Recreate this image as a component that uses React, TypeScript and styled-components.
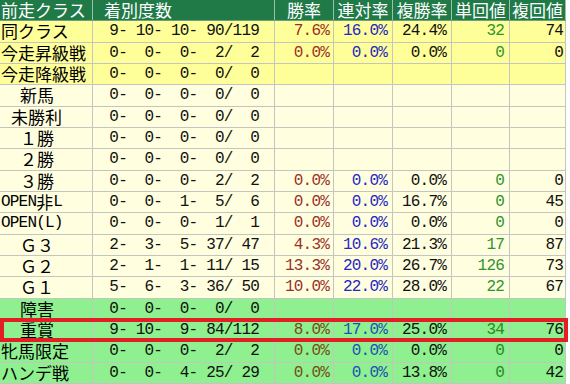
import React from "react";
import styled, { createGlobalStyle, css } from "styled-components";

const GlobalStyle = createGlobalStyle`
  html, body { margin: 0; padding: 0; background: #ffffff; }
  body { font-family: "Noto Sans CJK JP", sans-serif; }
`;

type Kind = "head" | "yellow" | "cream" | "green";

interface RowData {
  label: string;
  indent: number;
  kind: Exclude<Kind, "head">;
  rec: string;
  win?: string;
  ren?: string;
  fuku?: string;
  tan?: string;
  fk?: string;
  highlight?: boolean;
}

const EMPTY = " 0-  0-  0-  0/  0";

const rows: RowData[] = [
  { label: "同クラス", indent: 1, kind: "yellow", rec: " 9- 10- 10- 90/119", win: "7.6%", ren: "16.0%", fuku: "24.4%", tan: "32", fk: "74" },
  { label: "今走昇級戦", indent: 1, kind: "yellow", rec: " 0-  0-  0-  2/  2", win: "0.0%", ren: "0.0%", fuku: "0.0%", tan: "0", fk: "0" },
  { label: "今走降級戦", indent: 1, kind: "yellow", rec: EMPTY },
  { label: "新馬", indent: 20, kind: "cream", rec: EMPTY },
  { label: "未勝利", indent: 11, kind: "cream", rec: EMPTY },
  { label: "１勝", indent: 20, kind: "cream", rec: EMPTY },
  { label: "２勝", indent: 20, kind: "cream", rec: EMPTY },
  { label: "３勝", indent: 20, kind: "cream", rec: " 0-  0-  0-  2/  2", win: "0.0%", ren: "0.0%", fuku: "0.0%", tan: "0", fk: "0" },
  { label: "OPEN非L", indent: 1, kind: "cream", rec: " 0-  0-  1-  5/  6", win: "0.0%", ren: "0.0%", fuku: "16.7%", tan: "0", fk: "45" },
  { label: "OPEN(L)", indent: 1, kind: "cream", rec: " 0-  0-  0-  1/  1", win: "0.0%", ren: "0.0%", fuku: "0.0%", tan: "0", fk: "0" },
  { label: "Ｇ３", indent: 20, kind: "cream", rec: " 2-  3-  5- 37/ 47", win: "4.3%", ren: "10.6%", fuku: "21.3%", tan: "17", fk: "87" },
  { label: "Ｇ２", indent: 20, kind: "cream", rec: " 2-  1-  1- 11/ 15", win: "13.3%", ren: "20.0%", fuku: "26.7%", tan: "126", fk: "73" },
  { label: "Ｇ１", indent: 20, kind: "cream", rec: " 5-  6-  3- 36/ 50", win: "10.0%", ren: "22.0%", fuku: "28.0%", tan: "22", fk: "67" },
  { label: "障害", indent: 20, kind: "green", rec: EMPTY },
  { label: "重賞", indent: 20, kind: "green", rec: " 9- 10-  9- 84/112", win: "8.0%", ren: "17.0%", fuku: "25.0%", tan: "34", fk: "76", highlight: true },
  { label: "牝馬限定", indent: 1, kind: "green", rec: " 0-  0-  0-  2/  2", win: "0.0%", ren: "0.0%", fuku: "0.0%", tan: "0", fk: "0" },
  { label: "ハンデ戦", indent: 1, kind: "green", rec: " 0-  0-  4- 25/ 29", win: "0.0%", ren: "0.0%", fuku: "13.8%", tan: "0", fk: "42" },
];

const bg: Record<Kind, string> = {
  head: "#1f7a47",
  yellow: "#ffff99",
  cream: "#ffffe0",
  green: "#8ef08e",
};

const Table = styled.div`
  width: 566px;
  height: 384px;
  display: flex;
  flex-direction: column;
`;

const Row = styled.div<{ $kind: Kind; $highlight?: boolean }>`
  flex: 1 1 0;
  min-height: 0;
  position: relative;
  display: grid;
  grid-template-columns: 93px 182px 59px 59px 59px 58px 56px;
  background: ${(p) => bg[p.$kind]};
  border-bottom: 1px solid ${(p) => (p.$kind === "head" ? "#6f9f80" : "#c4c4c0")};
  box-sizing: border-box;
  ${(p) =>
    p.$highlight &&
    css`
      &::after {
        content: "";
        position: absolute;
        left: 0;
        right: -2px;
        top: -2px;
        bottom: -2px;
        border: 4px solid #e31e24;
        pointer-events: none;
        z-index: 2;
      }
    `}
`;

const Cell = styled.div<{ $head?: boolean }>`
  display: flex;
  align-items: center;
  min-width: 0;
  white-space: pre;
  box-sizing: border-box;
  border-right: 1px solid ${(p) => (p.$head ? "#9fc0a8" : "#c4c4c0")};
  line-height: 18px;
`;

const HeadCell = styled(Cell)<{ $align: "left" | "center"; $pad: number }>`
  justify-content: ${(p) => (p.$align === "left" ? "flex-start" : "center")};
  padding-left: ${(p) => p.$pad}px;
  color: #ffffff;
  font-family: "Noto Sans CJK JP", sans-serif;
  font-size: 17px;
`;

const LabelCell = styled(Cell)<{ $indent: number }>`
  justify-content: flex-start;
  padding-left: ${(p) => p.$indent}px;
  color: #000000;
  font-family: "Noto Sans CJK JP", sans-serif;
  font-size: 17px;
`;

const Half = styled.span`
  font-family: "Liberation Mono", monospace;
  font-size: 16px;
  letter-spacing: -0.8px;
`;

type Tone = "win" | "ren" | "plain" | "tan";

const toneColor = (tone: Tone, kind: Kind) => {
  switch (tone) {
    case "win":
      return kind === "green" ? "#7a4a18" : "#9a2f2a";
    case "ren":
      return kind === "green" ? "#2050b8" : "#2626c4";
    case "tan":
      return kind === "green" ? "#268a26" : "#2f942f";
    default:
      return "#111111";
  }
};

const NumCell = styled(Cell)<{ $tone: Tone; $kind: Kind; $pad: number }>`
  justify-content: flex-end;
  padding-right: ${(p) => p.$pad}px;
  color: ${(p) => toneColor(p.$tone, p.$kind)};
  font-family: "Liberation Mono", monospace;
  font-size: 16px;
  letter-spacing: -0.8px;
`;

const Label: React.FC<{ text: string }> = ({ text }) => {
  const parts = text.match(/[\x20-\x7e]+|[^\x20-\x7e]+/g) || [];
  return (
    <>
      {parts.map((p, i) =>
        /^[\x20-\x7e]+$/.test(p) ? <Half key={i}>{p}</Half> : <span key={i}>{p}</span>
      )}
    </>
  );
};

const headers: { text: string; align: "left" | "center"; pad: number }[] = [
  { text: "前走クラス", align: "left", pad: 1 },
  { text: "着別度数", align: "left", pad: 11 },
  { text: "勝率", align: "center", pad: 0 },
  { text: "連対率", align: "center", pad: 0 },
  { text: "複勝率", align: "center", pad: 0 },
  { text: "単回値", align: "center", pad: 0 },
  { text: "複回値", align: "center", pad: 0 },
];

export default function App() {
  return (
    <>
      <GlobalStyle />
      <Table>
        <Row $kind="head">
          {headers.map((h) => (
            <HeadCell key={h.text} $head $align={h.align} $pad={h.pad}>
              {h.text}
            </HeadCell>
          ))}
        </Row>
        {rows.map((r) => (
          <Row key={r.label} $kind={r.kind} $highlight={r.highlight}>
            <LabelCell $indent={r.indent}>
              <Label text={r.label} />
            </LabelCell>
            <NumCell $tone="plain" $kind={r.kind} $pad={15}>
              {r.rec}
            </NumCell>
            <NumCell $tone="win" $kind={r.kind} $pad={4}>
              {r.win ?? ""}
            </NumCell>
            <NumCell $tone="ren" $kind={r.kind} $pad={5}>
              {r.ren ?? ""}
            </NumCell>
            <NumCell $tone="plain" $kind={r.kind} $pad={5}>
              {r.fuku ?? ""}
            </NumCell>
            <NumCell $tone="tan" $kind={r.kind} $pad={5}>
              {r.tan ?? ""}
            </NumCell>
            <NumCell $tone="plain" $kind={r.kind} $pad={2}>
              {r.fk ?? ""}
            </NumCell>
          </Row>
        ))}
      </Table>
    </>
  );
}
